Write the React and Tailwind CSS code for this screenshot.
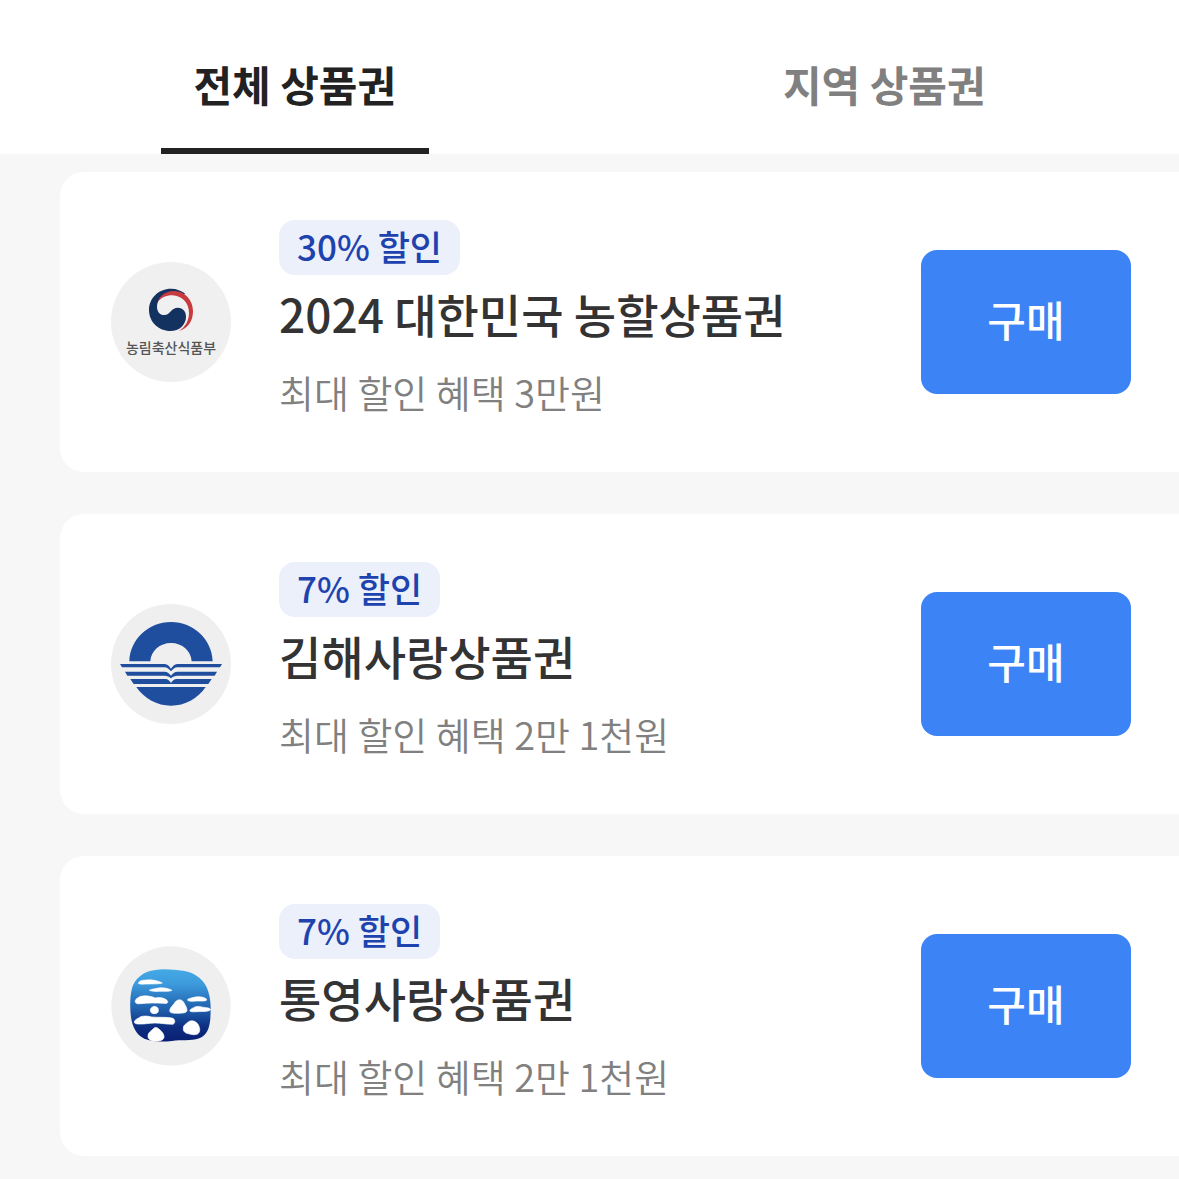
import React, { useState } from 'react';

const MafraLogo = () => (
    <svg viewBox="33 36 360 360" className="h-[120px] w-[120px] shrink-0" role="img" aria-label="농림축산식품부">
        <circle cx="213" cy="216" r="180" fill="#f0f0f0" />
        <path d="M256 131C244 122 230 116 213 116C176 116 147 144 147 180C147 216 176 243 211 243C238 243 258 224 258 200C258 184 248 173 234 173C212 173 211 195 193 195C179 195 171 184 171 170C171 146 192 131 218 131C236 131 248 133 256 131Z" fill="#14325f" />
        <path d="M173 156C180 134 201 122 224 123C256 124 279 151 279 184C279 214 263 236 237 243C257 229 267 212 267 188C267 158 245 137 217 136C198 136 182 144 173 156Z" fill="#c73a3f" />
        <text x="213" y="309" textAnchor="middle" fontSize="42" fill="#555" className="font-['Noto_Sans_CJK_KR',sans-serif] font-medium">농림축산식품부</text>
    </svg>
);

const GimhaeLogo = () => (
    <svg viewBox="33 27 360 360" className="h-[120px] w-[120px] shrink-0" role="img" aria-label="김해시">
        <circle cx="213" cy="207" r="180" fill="#efefef" />
        <g fill="#1f4e9e">
            <path d="M88 199C90 133 145 81 213 81C281 81 336 133 338 199H275C273 168 247 144 213 144C179 144 153 168 151 199Z" />
            <path d="M60 207H194C203 207 208 214 213 221C218 214 223 207 232 207H366L360 217H233C224 217 219 223 213 229C207 223 202 217 193 217H66Z" />
            <path d="M75 230H193C203 230 208 236 213 242C218 236 223 230 233 230H351L344 242H233C224 242 218 245 213 250C208 245 202 242 193 242H82Z" />
            <path d="M91 252H196C204 252 209 258 213 264C217 258 222 252 230 252H335L325 267H101Z" />
            <path d="M109 276H317C293 311 255 332 213 332C171 332 133 311 109 276Z" />
        </g>
    </svg>
);

const TongyeongLogo = () => (
    <svg viewBox="33 25 360 360" className="h-[120px] w-[120px] shrink-0" role="img" aria-label="통영시">
        <defs>
            <linearGradient id="sea" x1="0" y1="0" x2="0" y2="1">
                <stop offset="0" stopColor="#45a9e6" />
                <stop offset="0.2" stopColor="#3c9bdc" />
                <stop offset="0.55" stopColor="#1f60ad" />
                <stop offset="0.8" stopColor="#0d2d80" />
                <stop offset="1" stopColor="#0a1f73" />
            </linearGradient>
        </defs>
        <circle cx="213" cy="205" r="179" fill="#efefef" />
        <path d="M166 97C195 92 223 97 250 99C288 104 317 131 325 162C334 189 332 217 331 244C328 272 321 293 298 302C271 311 244 306 216 310C187 313 157 313 133 303C110 293 97 268 93 239C89 208 90 176 96 152C103 125 130 100 166 97Z" fill="url(#sea)" />
        <g fill="#fff" stroke="#fff" strokeWidth="2" strokeLinejoin="round">
            <path d="M115 137C118 127 130 128 140 127C158 125 175 130 187 136C174 140 157 138 143 139C132 139 120 141 115 137Z" />
            <path d="M148 158C155 153 166 154 175 151C190 149 206 152 216 158C207 163 190 160 178 161C167 162 154 161 148 158Z" />
            <path d="M106 193C104 185 114 180 122 176C137 172 154 176 166 181C178 178 193 180 201 188C206 194 202 199 192 197C168 196 145 195 122 198C114 199 107 198 106 193Z" />
            <path d="M209 220C209 211 217 205 223 197C230 184 245 183 251 194C255 202 261 209 261 218C260 227 247 226 236 227C224 226 211 228 209 220Z" />
            <path d="M262 187C266 181 277 181 286 178C300 176 315 178 321 186C315 193 301 189 288 190C278 191 267 192 262 187Z" />
            <path d="M269 219C272 213 279 211 287 207C299 204 309 210 320 210C328 211 332 213 331 217C323 223 306 221 292 222C283 222 272 224 269 219Z" />
            <path d="M151 218C151 210 157 208 163 206C171 207 176 211 175 219C175 227 167 228 161 228C154 227 151 224 151 218Z" />
            <path d="M103 253C104 245 114 243 122 237C133 234 145 235 155 238C177 240 202 237 219 242C226 247 226 256 219 260C199 260 183 256 165 256C147 256 133 260 117 259C109 259 103 258 103 253Z" />
            <path d="M250 271C250 262 259 258 266 252C276 246 288 251 294 260C300 270 302 283 293 289C281 294 269 289 258 286C252 283 249 278 250 271Z" />
            <path d="M144 294C144 284 154 280 160 273C166 266 174 270 180 277C188 283 193 292 192 300C188 310 173 312 160 310C149 308 143 302 144 294Z" />
        </g>
    </svg>
);

const tabs = ['전체 상품권', '지역 상품권'];

const vouchers = [
    { id: 1, Logo: MafraLogo, discount: '30% 할인', title: '2024 대한민국 농할상품권', benefit: '최대 할인 혜택 3만원' },
    { id: 2, Logo: GimhaeLogo, discount: '7% 할인', title: '김해사랑상품권', benefit: '최대 할인 혜택 2만 1천원' },
    { id: 3, Logo: TongyeongLogo, discount: '7% 할인', title: '통영사랑상품권', benefit: '최대 할인 혜택 2만 1천원' },
];

const VoucherCard = ({ voucher }) => {
    const { Logo, discount, title, benefit } = voucher;

    return (
        <li className="flex items-center gap-12 rounded-l-3xl bg-white py-12 pl-[51px] pr-12">
            <Logo />
            <div className="min-w-0 flex-1">
                <span className="inline-block rounded-2xl bg-[#ebf0fa] px-[18px] pb-[3px] text-[35px] leading-[52px] font-medium text-[#1e43ae] align-top">{discount}</span>
                <h2 className="pb-2 text-[46px] leading-[76px] font-medium whitespace-nowrap text-[#333]">{title}</h2>
                <p className="text-[38px] leading-[65px] font-[350] text-[#808080]">{benefit}</p>
            </div>
            <button type="button" className="h-36 w-[210px] shrink-0 rounded-2xl bg-[#3c83f6] pb-2 text-[42px] font-medium text-white">구매</button>
        </li>
    );
};

const App = () => {
    const [active, setActive] = useState(0);

    return (
        <div className="min-h-screen overflow-x-hidden bg-[#f7f7f7] font-['Noto_Sans_CJK_KR',sans-serif]">
            {/* Tabs */}
            <div role="tablist" className="grid grid-cols-2 bg-white">
                {tabs.map((tab, index) => (
                    <button
                        key={tab}
                        type="button"
                        role="tab"
                        aria-selected={active === index}
                        onClick={() => setActive(index)}
                        className={`mx-auto w-[268px] border-b-6 pt-6 pb-1 text-[42px] leading-[120px] font-bold ${active === index ? 'border-[#222] text-[#222]' : 'border-transparent text-[#808080]'}`}
                    >
                        {tab}
                    </button>
                ))}
            </div>

            {/* Vouchers */}
            <ul className="flex flex-col gap-[42px] pt-[18px] pb-6 pl-[60px]">
                {vouchers.map((voucher) => (
                    <VoucherCard key={voucher.id} voucher={voucher} />
                ))}
            </ul>
        </div>
    );
};

export default App;
